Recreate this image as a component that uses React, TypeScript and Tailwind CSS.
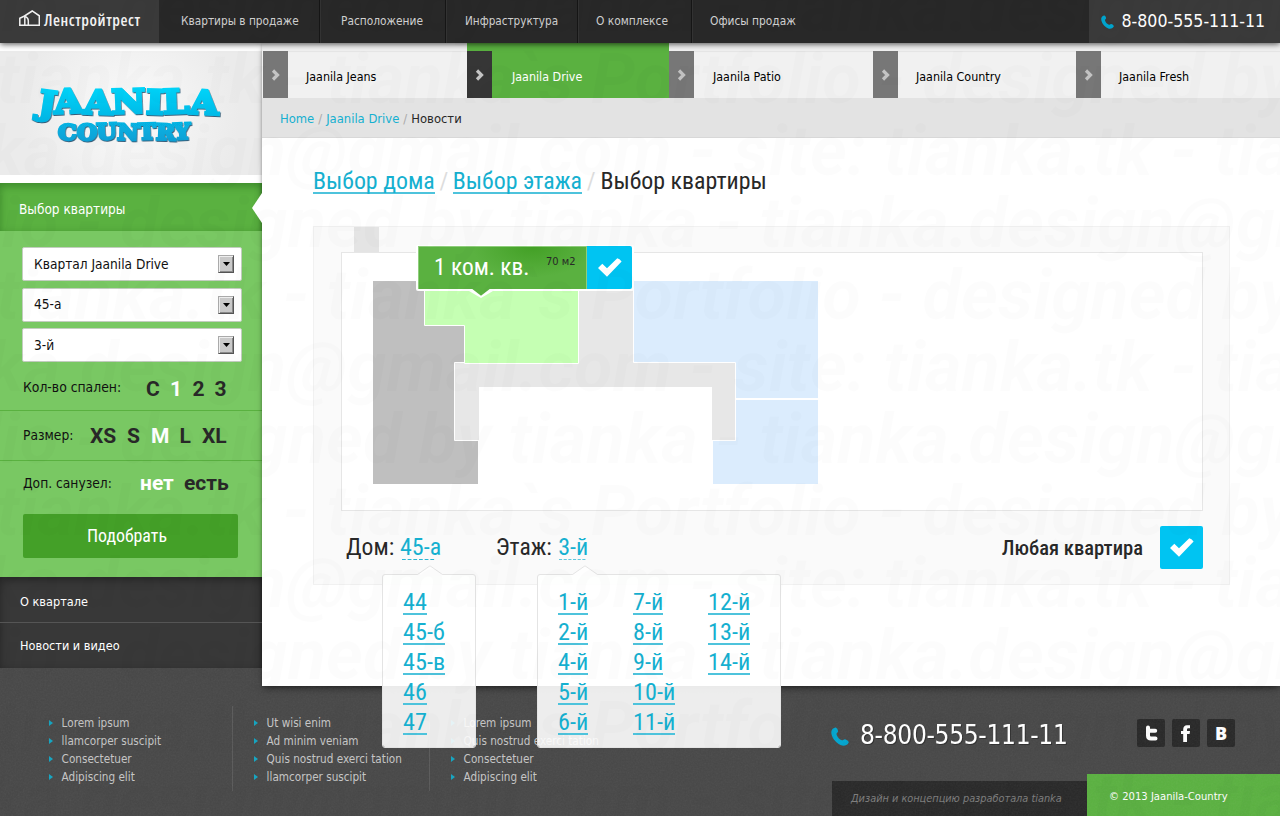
import type { ReactNode } from "react";

const TOP_LINKS = [
  { label: "Квартиры в продаже", cell: "w-[161px] pl-[22px]", text: "text-[11.75px]" },
  { label: "Расположение", cell: "w-[126px] pl-[21px]", text: "text-[11.8px]" },
  { label: "Инфраструктура", cell: "w-[132px] pl-[19px]", text: "text-[11.65px]" },
  { label: "О комплексе", cell: "w-[114px] pl-[18px]", text: "text-[11.85px]" },
  { label: "Офисы продаж", cell: "w-[160px] pl-[18px]", text: "text-[11.85px]" },
];

const TABS = [
  { label: "Jaanila Jeans", cell: "w-[204px]", pad: "pl-[18px]", active: false },
  { label: "Jaanila Drive", cell: "w-[202px]", pad: "pl-[20px]", active: true },
  { label: "Jaanila Patio", cell: "w-[204px]", pad: "pl-[19px]", active: false },
  { label: "Jaanila Country", cell: "w-[203px]", pad: "pl-[18px]", active: false },
  { label: "Jaanila Fresh", cell: "w-[204px]", pad: "pl-[18px]", active: false },
];

const HOUSES = ["44", "45-б", "45-в", "46", "47"];
const FLOORS = [
  ["1-й", "2-й", "4-й", "5-й", "6-й"],
  ["7-й", "8-й", "9-й", "10-й", "11-й"],
  ["12-й", "13-й", "14-й"],
];

const FOOTER_LINKS = [
  { pad: "w-[184px]", items: ["Lorem ipsum", "llamcorper suscipit", "Consectetuer", "Adipiscing elit"] },
  { pad: "w-[176px]", items: ["Ut wisi enim", "Ad minim veniam", "Quis nostrud exerci tation", "llamcorper suscipit"] },
  { pad: "w-[200px]", items: ["Lorem ipsum", "Quis nostrud exerci tation", "Consectetuer", "Adipiscing elit"] },
];

const WATERMARK_ROWS = [
  { text: "tianka`s Portfolio - designed by tianka - tianka.design@gmail", shift: "-ml-[476px]" },
  { text: "site: tianka.tk - tianka`s Portfolio - designed by tianka", shift: "-ml-[154px]" },
  { text: "tianka.design@gmail.com - site: tianka.tk - tianka`s", shift: "-ml-[129px]" },
];

function PhoneIcon({ className }: { className: string }) {
  return (
    <svg viewBox="0 0 18 19" className={className}>
      <path
        fill="#00a5cf"
        d="M4.5 0.5C6 0.3 7.6 4 6.8 5.1C6.1 6 5.3 6.2 5.6 7.5C6.5 10.5 8.5 12.5 11 13.3C12 13.5 12.8 12.1 14 12.2C16 12.5 18.4 14.5 17.5 16C16 18.5 12.5 19.5 9.5 18C4 15.5 0 9.5 0.3 4.8C0.5 2.5 2.5 0.7 4.5 0.5Z"
      />
    </svg>
  );
}

function Check({ className }: { className: string }) {
  return (
    <svg viewBox="0 0 24 19" className={className}>
      <path fill="#fff" d="M0 10L4.3 5.8L9 10.3L19.3 0.2Q21.5 0.5 23.6 3.6L9 18.8Z" />
    </svg>
  );
}

function Chevron() {
  return (
    <svg viewBox="0 0 10 12" className="h-[12px] w-[10px]">
      <path d="M2 1.5L6.5 6L2 10.5" fill="none" stroke="#c4c4c4" strokeWidth="3.2" />
    </svg>
  );
}

function TopBar() {
  return (
    <header className="relative z-10 flex h-[43px] bg-[#282828] text-[#d0d0d0] shadow-[0_1px_6px_rgba(0,0,0,0.7)]">
      <div className="flex w-[159px] items-start bg-[#3a3a3a] pl-[19px]">
        <svg viewBox="0 0 21 17" className="mt-[10px] h-[17px] w-[21px] shrink-0" fill="none" stroke="#f2f2f2" strokeWidth="1.5">
          <path d="M0.8 15.3V8.3L5.5 6L13.2 1L20.3 5.8V15.3Z" />
          <path d="M5.8 15.3V6.5Q9.3 7.5 9.3 11V15.3" />
        </svg>
        <span className="ml-[4px] mt-[10px] whitespace-nowrap font-['Open_Sans'] text-[16px] font-semibold leading-[20px] tracking-[0.55px] text-[#f2f2f2] [font-stretch:75%]">
          Ленстройтрест
        </span>
      </div>
      <nav className="flex">
        {TOP_LINKS.map((l, i) => (
          <div
            key={l.label}
            className={`flex items-center whitespace-nowrap pt-px ${l.cell} ${l.text} ${i < 4 ? "border-r border-[#161616] shadow-[1px_0_0_#333]" : ""}`}
          >
            {l.label}
          </div>
        ))}
      </nav>
      <div className="ml-auto flex w-[191px] items-center bg-[#3a3a3a] pl-[12px]">
        <PhoneIcon className="h-[14px] w-[13px]" />
        <span className="ml-[7.5px] pb-[1px] text-[17.6px] text-white">8-800-555-111-11</span>
      </div>
    </header>
  );
}

function BrandLogo() {
  return (
    <svg viewBox="0 0 200 66" className="h-[66px] w-[200px]">
      <defs>
        <linearGradient id="brand" x1="0" y1="0" x2="0" y2="66" gradientUnits="userSpaceOnUse">
          <stop offset="0.05" stopColor="#00d8fc" />
          <stop offset="1" stopColor="#0a9bd2" />
        </linearGradient>
        <filter id="brandShadow" x="-5%" y="-5%" width="110%" height="115%">
          <feDropShadow dx="0.7" dy="1" stdDeviation="0.3" floodColor="#1d4c6a" floodOpacity="0.9" />
        </filter>
      </defs>
      <g
        fill="url(#brand)"
        stroke="url(#brand)"
        strokeWidth="2.8"
        strokeLinejoin="miter"
        fontFamily="DejaVu Serif"
        fontWeight="700"
        filter="url(#brandShadow)"
      >
        <text x="12" y="32.5" fontSize="33" textLength="181" lengthAdjust="spacingAndGlyphs" rotate="8 -3 2 -2 2 -2 3">
          JAANILA
        </text>
        <text x="33" y="58.5" fontSize="22" strokeWidth="2.4" textLength="133" lengthAdjust="spacingAndGlyphs" rotate="0 3 -2 2 -2 2 -3">
          COUNTRY
        </text>
      </g>
    </svg>
  );
}

function SelectBox({ value }: { value: string }) {
  return (
    <div className="flex h-[34px] w-[220px] items-center justify-between rounded-[2px] border border-[#c3cdc0] bg-white pl-[11px] pr-[7px] text-[13.6px] text-[#111]">
      <span>{value}</span>
      <span className="flex h-[18px] w-[16px] items-center justify-center border border-b-[#555] border-l-[#aaa] border-r-[#555] border-t-[#aaa] bg-[#c9c9c9] shadow-[inset_1px_1px_0_#eee,inset_-1px_-1px_0_#8a8a8a]">
        <svg viewBox="0 0 7 4" className="h-[4px] w-[7px]">
          <path d="M0 0H7L3.5 4Z" fill="#000" />
        </svg>
      </span>
    </div>
  );
}

function Option({ children, on, cls }: { children: ReactNode; on?: boolean; cls: string }) {
  return <span className={`${cls} ${on ? "text-white" : "text-[#282828]"}`}>{children}</span>;
}

const OPTION_GROUP = "flex font-['Roboto'] text-[21px] font-bold leading-[24px]";

function Sidebar() {
  return (
    <aside className="flex w-[262px] flex-col">
      <div className="h-[140px] bg-white pt-[8px]">
        <div className="flex h-[124px] items-start justify-start bg-[radial-gradient(circle_at_50%_50%,#fafafa,#ebebeb_75%)] pl-[25px] pt-[30px]">
          <BrandLogo />
        </div>
      </div>
      <div className="flex h-[48px] items-center justify-between bg-[#5ab140] pl-[19px] shadow-[inset_0_3px_8px_rgba(0,60,0,0.35)]">
        <span className="pt-[4px] text-[13.5px] text-white">Выбор квартиры</span>
        <svg viewBox="0 0 10 30" className="relative z-10 mt-px h-[30px] w-[10px]">
          <path d="M10 0L0 15L10 30Z" fill="#fff" />
        </svg>
      </div>
      <div className="h-[346px] bg-[#79c863]">
        <div className="flex flex-col gap-[6.5px] pl-[22px] pt-[16px]">
          <SelectBox value="Квартал Jaanila Drive" />
          <SelectBox value="45-а" />
          <SelectBox value="3-й" />
        </div>
        <div className="flex h-[49px] items-start border-b border-[#5ab140] pl-[23px] text-[13.8px] text-[#111]">
          <span className="w-[123px] pt-[15px] leading-[20px]">Кол-во спален:</span>
          <div className={`${OPTION_GROUP} pt-[15px]`}>
            <Option cls="w-[24px]">C</Option>
            <Option cls="w-[22.5px]" on>1</Option>
            <Option cls="w-[22px]">2</Option>
            <Option cls="">3</Option>
          </div>
        </div>
        <div className="flex h-[50px] items-start border-b border-[#5ab140] pl-[23px] text-[13.7px] text-[#111]">
          <span className="w-[67px] pt-[14px] leading-[20px]">Размер:</span>
          <div className={`${OPTION_GROUP} pt-[13px]`}>
            <Option cls="w-[37px]">XS</Option>
            <Option cls="w-[24px]">S</Option>
            <Option cls="w-[28.5px]" on>M</Option>
            <Option cls="w-[22.5px]">L</Option>
            <Option cls="">XL</Option>
          </div>
        </div>
        <div className="flex h-[53px] items-start pl-[23px] text-[13.7px] text-[#111]">
          <span className="w-[117px] pt-[12px] leading-[20px]">Доп. санузел:</span>
          <div className={`${OPTION_GROUP} pt-[10px]`}>
            <Option cls="w-[44px]" on>нет</Option>
            <Option cls="">есть</Option>
          </div>
        </div>
        <div className="ml-[23px] flex h-[44px] w-[215px] items-center justify-center rounded-[2px] bg-[#44a028] pr-[7px] font-['Roboto_Condensed'] text-[17.9px] text-white">
          Подобрать
        </div>
      </div>
      <div className="h-[91px] bg-[#383838] text-[12.6px] text-white shadow-[inset_0_3px_8px_rgba(0,0,0,0.35)]">
        <div className="flex h-[46px] items-center border-b border-[#555] pl-[20px] pt-[5px]">О квартале</div>
        <div className="flex h-[45px] items-center pl-[20px] pt-px">Новости и видео</div>
      </div>
    </aside>
  );
}

function CrumbTitle() {
  const link = "border-b-2 border-[#4dc3dc] pt-[5px] leading-[22px] text-[#15b0d0]";
  return (
    <div className="flex whitespace-nowrap pl-[51px] pt-[27px] font-['Roboto_Condensed'] text-[23.9px]">
      <span className={link}>Выбор дома</span>
      <span className="w-[18px] pt-[5px] text-center leading-[22px] text-[#ddd]">/</span>
      <span className={link}>Выбор этажа</span>
      <span className="w-[18.5px] pt-[5px] text-center leading-[22px] text-[#ddd]">/</span>
      <span className="pt-[5px] leading-[22px] text-[#282828]">Выбор квартиры</span>
    </div>
  );
}

function FloorPlan() {
  return (
    <svg viewBox="341 252 862 259" className="h-[259px] w-[862px] shrink-0">
      <rect x="373" y="281" width="105" height="203" fill="#bfbfbf" />
      <path d="M633.5 281H818V398H735V362H633.5Z" fill="#dbecfd" />
      <path d="M713 441H736V400H818V484H713Z" fill="#dbecfd" />
      <path d="M579 281H633.5V362.5H735.5V440.5H712V387H479V440.5H454.5V362.5H579Z" fill="#e7e7e7" />
      <path d="M479 440.5H454.5V362.5H579M633.5 281V362.5H735.5V440.5H712" fill="none" stroke="#fff" strokeWidth="1" />
      <path d="M424.5 290V325.5H464.5V363.5H578.5V290Z" fill="#c5ffb3" stroke="#fff" strokeWidth="1" />
    </svg>
  );
}

function FlatTag() {
  return (
    <div className="absolute left-[74px] top-[-8px] flex h-[46px] w-[218px] rounded-[2px] bg-white p-[2px] pt-px">
      <div className="flex w-[169px] border border-b-0 border-[#8fce7c] bg-[#5ab140] bg-[radial-gradient(ellipse_60px_30px_at_68%_0%,#43a026,#5ab140)] pl-[15px] pt-[6px]">
        <span className="w-[112px] whitespace-nowrap font-['Roboto_Condensed'] text-[23.4px] leading-[28px] text-white">1 ком. кв.</span>
        <span className="whitespace-nowrap pt-px text-[11px] leading-[15px] text-[#282828]">70 м2</span>
      </div>
      <div className="flex w-[45px] items-center justify-center rounded-r-[2px] bg-[#00c4f2]">
        <Check className="h-[19px] w-[24px]" />
      </div>
      <svg viewBox="0 0 24 10" className="absolute left-[53px] top-[43px] h-[10px] w-[24px]">
        <path d="M0 1V3L12 10L24 3V1Z" fill="#fff" />
        <path d="M2 0L12 7.8L22 0Z" fill="#5ab140" />
      </svg>
    </div>
  );
}

function Popover({ className, arrow, children }: { className: string; arrow: string; children: ReactNode }) {
  return (
    <div className={`absolute top-[347px] h-[174px] rounded-[3px] border border-[#e4e4e4] bg-white/90 bg-clip-padding ${className}`}>
      <svg viewBox="0 0 28 11" className={`absolute top-[-10px] h-[11px] w-[28px] ${arrow}`}>
        <path d="M1 10L14 0.8L27 10V11H1Z" fill="#fefefe" />
        <path d="M0 9.5H1.5L14 0.8L26.5 9.5H28" fill="none" stroke="#e4e4e4" />
      </svg>
      {children}
    </div>
  );
}

function PickList({ items, className }: { items: string[]; className: string }) {
  return (
    <div className={`flex flex-col items-start gap-[3px] pt-[13px] font-['Roboto_Condensed'] text-[24.2px] text-[#15b0d0] ${className}`}>
      {items.map((t) => (
        <span key={t} className="border-b-2 border-[#4dc3dc] pt-[4px] leading-[21px]">{t}</span>
      ))}
    </div>
  );
}

function Dashed({ children, line }: { children: ReactNode; line: string }) {
  return (
    <span className="ml-[5px] flex flex-col text-[#15b0d0]">
      {children}
      <svg viewBox="0 0 36 2" preserveAspectRatio="xMinYMin slice" className={`mt-[-3px] h-[1px] ${line}`}>
        <path d="M0 0.5H36" stroke="#15b0d0" strokeDasharray="4 2" />
      </svg>
    </span>
  );
}

function Selector() {
  return (
    <section className="relative ml-[51px] mt-[32px] h-[359px] w-[917px] border border-[#f1f1f1] bg-[#fafafa]">
      <div className="ml-[40px] h-[25px] w-[25px] bg-[#e4e4e4]" />
      <div className="relative ml-[27px] flex h-[259px] w-[862px] items-center justify-center border border-[#e6e6e6] bg-white">
        <FloorPlan />
        <FlatTag />
      </div>
      <div className="flex h-[72px] pl-[32px] pt-[21px] font-['Roboto_Condensed'] text-[24px] leading-[30px] text-[#282828]">
        <span className="w-[49px] whitespace-nowrap text-[23.6px]">Дом:</span>
        <Dashed line="ml-[2px] w-[34px]">45-а</Dashed>
        <span className="ml-[54.5px] w-[57.5px] whitespace-nowrap text-[23.6px]">Этаж:</span>
        <Dashed line="ml-[1px] w-[28px]">3-й</Dashed>
        <span className="ml-auto whitespace-nowrap pt-px text-[20.6px] font-medium">Любая квартира</span>
        <span className="ml-[17px] mr-[26px] mt-[-6px] flex h-[43px] w-[43px] items-center justify-center rounded-[2px] bg-[#00c4f2]">
          <Check className="h-[19px] w-[24px]" />
        </span>
      </div>
      <Popover className="left-[68px] w-[94px]" arrow="left-[33px]">
        <PickList items={HOUSES} className="pl-[20px]" />
      </Popover>
      <Popover className="left-[223px] w-[244px]" arrow="left-[33px]">
        <div className="flex pl-[20px]">
          {FLOORS.map((col) => (
            <PickList key={col[0]} items={col} className="w-[75px] shrink-0" />
          ))}
        </div>
      </Popover>
    </section>
  );
}

function Content() {
  return (
    <main className="relative z-[5] flex h-[643px] w-[1018px] flex-col bg-white shadow-[0_4px_7px_-2px_rgba(0,0,0,0.5),0_0_3px_rgba(0,0,0,0.2)]">
      <div className="flex h-[55px] bg-[#f1f1f1] pl-px">
        {TABS.map((t) => (
          <div key={t.label} className={`flex pt-[8px] text-[12.4px] ${t.cell} ${t.active ? "bg-[#5ab140] text-white" : "text-black"}`}>
            <span className={`flex h-[47px] w-[25px] items-center justify-center pt-px ${t.active ? "bg-[#363636]" : "bg-[#777]"}`}>
              <Chevron />
            </span>
            <span className={`flex flex-1 items-center whitespace-nowrap border-t pt-[4px] ${t.pad} ${t.active ? "border-transparent" : "border-[#e6e6e6]"}`}>{t.label}</span>
          </div>
        ))}
      </div>
      <div className="flex h-[40px] items-center gap-[4px] border-b border-[#d8d8d8] bg-[#e3e3e3] pl-[18px] pt-[2px] text-[12.9px] text-[#15b0d0]">
        <span>Home</span>
        <span className="text-[#aaa]">/</span>
        <span>Jaanila Drive</span>
        <span className="text-[#aaa]">/</span>
        <span className="text-[#282828]">Новости</span>
      </div>
      <CrumbTitle />
      <Selector />
    </main>
  );
}

function Footer() {
  return (
    <footer className="flex h-[130px]">
      <div className="flex pt-[20px]">
        {FOOTER_LINKS.map((col, i) => (
          <ul
            key={i}
            className={`flex h-[85px] flex-col pt-[8px] text-[11.65px] leading-[18px] text-[#c6c6c6] ${i === 0 ? "ml-[49px]" : "ml-[21px]"} ${i < 2 ? "border-r border-[#5a5a5a]" : ""} ${col.pad}`}
          >
            {col.items.map((t) => (
              <li key={t} className="flex items-center gap-[8.6px] whitespace-nowrap">
                <svg viewBox="0 0 4 6" className="h-[6px] w-[4px] flex-none">
                  <path d="M0 0L4 3L0 6Z" fill="#12a5c2" />
                </svg>
                {t}
              </li>
            ))}
          </ul>
        ))}
      </div>
      <div className="ml-auto flex w-[448px] flex-col justify-between">
        <div className="-ml-px flex items-center pt-[31px]">
          <PhoneIcon className="mt-[3px] h-[19px] w-[18px]" />
          <span className="ml-[11px] w-[277px] whitespace-nowrap pt-px text-[26px] leading-[34px] tracking-[-0.3px] text-white drop-shadow-[1px_1px_0_rgba(0,0,0,0.3)]">
            8-800-555-111-11
          </span>
          <span className="-mt-[3px] flex gap-[7px]">
            <span className="flex h-[28px] w-[28px] items-center justify-center rounded-[2px] bg-[#282828]">
              <svg viewBox="0 0 13 16" className="h-[16px] w-[13px]" fill="none" stroke="#fff" strokeWidth="4" strokeLinecap="round">
                <path d="M3 2.5V10.5Q3 13.5 6 13.5H10.5M3 5.8H10.2" />
              </svg>
            </span>
            <span className="flex h-[28px] w-[28px] items-center justify-center rounded-[2px] bg-[#282828]">
              <svg viewBox="0 0 10 17" className="h-[17px] w-[10px]">
                <path d="M2.2 17V9H0V6H2.2V4.5Q2.2 0.5 6 0.3H9V3.2H7.2Q6 3.2 6 4.5V6H9L8.6 9H6V17Z" fill="#fff" />
              </svg>
            </span>
            <span className="flex h-[28px] w-[28px] items-center justify-center rounded-[2px] bg-[#282828] font-['Open_Sans'] text-[18px] font-extrabold leading-none text-white">
              B
            </span>
          </span>
        </div>
        <div className="flex items-end">
          <div className="flex h-[35px] w-[255px] items-center whitespace-nowrap bg-[#282828] pl-[19px] pt-px text-[10.85px] italic text-[#7c7c7c]">
            Дизайн и концепцию разработала tianka
          </div>
          <div className="flex h-[42px] w-[193px] items-center whitespace-nowrap bg-[#5ab140] pl-[22px] pt-[4px] text-[11.15px] text-white">
            © 2013 Jaanila-Country
          </div>
        </div>
      </div>
    </footer>
  );
}

function Watermark() {
  return (
    <div
      aria-hidden
      className="pointer-events-none absolute inset-0 z-20 flex flex-col overflow-hidden whitespace-nowrap pt-px font-['Roboto'] text-[70.5px] font-bold italic leading-[72px] text-black/[0.011]"
    >
      <div className="mt-[-30px]">
        {[0, 1, 2, 3, 4, 5, 6, 7, 8, 9, 10, 11].map((k) => (
          <div key={k} className={WATERMARK_ROWS[k % 3].shift}>{WATERMARK_ROWS[k % 3].text}</div>
        ))}
      </div>
    </div>
  );
}

export default function App() {
  return (
    <div className="relative flex h-[816px] w-[1280px] flex-col overflow-hidden bg-[#474747] font-['DejaVu_Sans_Condensed',sans-serif]">
      <svg className="absolute inset-0 h-full w-full opacity-[0.07]">
        <filter id="grain">
          <feTurbulence type="fractalNoise" baseFrequency="0.6" numOctaves="2" />
          <feColorMatrix type="saturate" values="0" />
        </filter>
        <rect width="100%" height="100%" filter="url(#grain)" />
      </svg>
      <TopBar />
      <div className="relative z-[5] flex items-start">
        <Sidebar />
        <Content />
      </div>
      <Footer />
      <Watermark />
    </div>
  );
}
